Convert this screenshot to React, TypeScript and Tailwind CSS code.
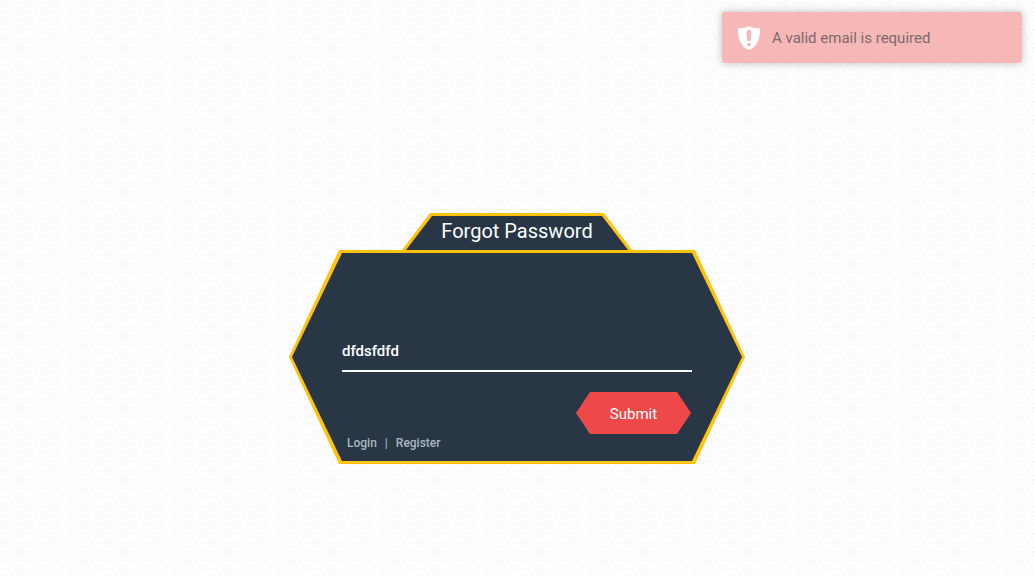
import { useState } from "react";

function Backdrop() {
  return (
    <svg className="absolute inset-0 -z-10 h-full w-full" aria-hidden="true">
      <defs>
        <pattern id="honeycomb" width="26" height="18" patternUnits="userSpaceOnUse">
          <g fill="none" stroke="#f7f7f7" strokeWidth="1">
            <path d="M9.3 11.7 L14 2.7 L9.3 -6.3 M9.3 11.7 L14 20.7" />
            <path d="M14 2.7 H26 M0 11.7 H9.3 M23.7 11.7 H26" />
            <path d="M15.2 11.7 L17.4 7.9 H22 L24.2 11.7 L22 15.5 H17.4 Z" />
            <path d="M0 2.7 L1.9 -1.1 H6.5 L8.7 2.7 L6.5 6.5 H1.9 Z" />
            <path d="M0 20.7 L1.9 16.9 H6.5 L8.7 20.7" />
          </g>
          <circle cx="19.7" cy="11.7" r="1.3" fill="#f5f5f5" />
          <circle cx="4.2" cy="2.7" r="1.3" fill="#f5f5f5" />
        </pattern>
      </defs>
      <rect width="100%" height="100%" fill="url(#honeycomb)" />
    </svg>
  );
}

function ShieldIcon() {
  return (
    <svg className="h-6 w-6 shrink-0" viewBox="0 0 24 24" aria-hidden="true">
      <path
        fill="#fff"
        fillRule="evenodd"
        d="M12 0 C9.5 1.7 5 2.4 1 2.2 C.7 12.5 3.2 20 12 24 C20.8 20 23.3 12.5 23 2.2 C19 2.4 14.5 1.7 12 0 Z M12 3.8 C10.3 3.8 9.5 4.8 9.6 6.2 L10.1 13.6 C10.3 15.8 13.7 15.8 13.9 13.6 L14.4 6.2 C14.5 4.8 13.7 3.8 12 3.8 Z M12 16.7 A2 1.8 0 1 0 12 20.3 A2 1.8 0 1 0 12 16.7 Z"
      />
    </svg>
  );
}

function Toast({ message }: { message: string }) {
  return (
    <div
      role="alert"
      className="absolute top-3 right-3 flex w-[300px] items-center gap-[11px] rounded-[3px] bg-[#ec4848]/38 px-[15px] pt-[13px] pb-3 text-[15px] text-[#7b6a6c] shadow-[0_0_8px_rgba(0,0,0,0.25)]"
    >
      <ShieldIcon />
      <span className="leading-[26px]">{message}</span>
    </div>
  );
}

export default function App() {
  const [email, setEmail] = useState("dfdsfdfd");

  return (
    <main className="relative isolate flex min-h-screen items-center justify-center bg-[#fefefe] pt-[101px] font-[Roboto,sans-serif]">
      <Backdrop />
      <Toast message="A valid email is required" />

      <form noValidate onSubmit={(e) => e.preventDefault()} className="flex w-[456px] flex-col items-center">
        <div className="w-[230px] bg-[#ffc20e] px-1 pt-[3px] [clip-path:polygon(28px_0,calc(100%_-_28px)_0,100%_100%,0_100%)]">
          <h1 className="bg-[#293645] pb-1 text-center text-xl leading-[30px] text-white [clip-path:polygon(26px_0,calc(100%_-_26px)_0,100%_100%,0_100%)]">
            Forgot Password
          </h1>
        </div>

        <div className="w-full bg-[#ffc20e] p-[3px] [clip-path:polygon(50px_0,calc(100%_-_50px)_0,100%_50%,calc(100%_-_50px)_100%,50px_100%,0_50%)]">
          <div className="flex flex-col bg-[#293645] px-[50px] pt-[77px] pb-[9px] [clip-path:polygon(50px_0,calc(100%_-_50px)_0,100%_50%,calc(100%_-_50px)_100%,50px_100%,0_50%)]">
            <input
              type="email"
              aria-label="Email"
              value={email}
              onChange={(e) => setEmail(e.target.value)}
              className="h-[42px] w-full border-b-2 border-white bg-transparent pt-0.5 text-[15px] font-medium text-white outline-none"
            />
            <div className="flex justify-end pt-5 pr-px">
              <button
                type="submit"
                className="h-[42px] w-[115px] bg-[#ef4848] pt-0.5 text-[15px] text-white [clip-path:polygon(14px_0,calc(100%_-_14px)_0,100%_50%,calc(100%_-_14px)_100%,14px_100%,0_50%)]"
              >
                Submit
              </button>
            </div>
            <nav className="flex gap-2 px-[5px] text-xs leading-[18px] font-medium text-[#a9b7c0]">
              <a href="#login">Login</a>
              <span>|</span>
              <a href="#register">Register</a>
            </nav>
          </div>
        </div>
      </form>
    </main>
  );
}
